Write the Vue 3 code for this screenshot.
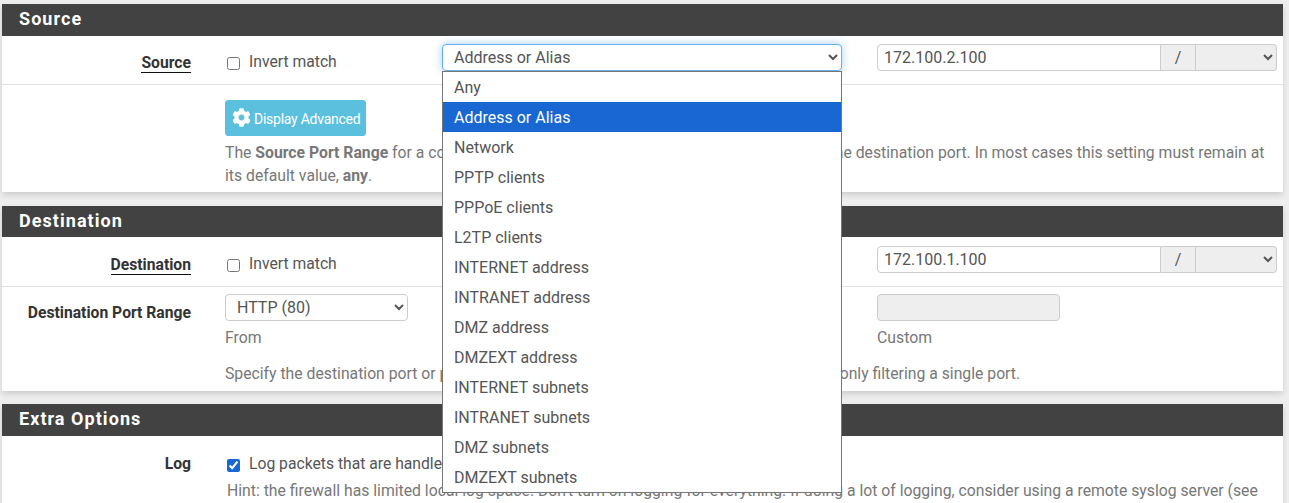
<script setup>
const targets = [
  "Any",
  "Address or Alias",
  "Network",
  "PPTP clients",
  "PPPoE clients",
  "L2TP clients",
  "INTERNET address",
  "INTRANET address",
  "DMZ address",
  "DMZEXT address",
  "INTERNET subnets",
  "INTRANET subnets",
  "DMZ subnets",
  "DMZEXT subnets",
];
</script>

<template>
  <div class="page">
    <section class="panel source">
      <h2>Source</h2>
      <div class="row first">
        <label class="lbl"><span class="under">Source</span></label>
        <label class="check"><input type="checkbox" /> <span>Invert match</span></label>
        <div class="picker">
          <select class="ctl focused">
            <option>Address or Alias</option>
          </select>
          <ul class="menu">
            <li v-for="t in targets" :key="t" :class="{ picked: t === 'Address or Alias' }">{{ t }}</li>
          </ul>
        </div>
        <div class="group last">
          <input class="ctl addr" type="text" value="172.100.2.100" />
          <span class="slash">/</span>
          <select class="ctl mask"></select>
        </div>
      </div>
      <div class="row advanced">
        <div class="wide">
          <button class="btn" type="button">
            <svg viewBox="0 0 512 512" width="19" height="19"><path fill="#fff" d="M487.4 315.7l-42.6-24.6c4.3-23.2 4.3-47 0-70.2l42.6-24.6c4.9-2.8 7.1-8.6 5.5-14-11.1-35.6-30-67.8-54.7-94.6-3.8-4.1-10-5.1-14.8-2.3L380.8 110c-17.9-15.4-38.5-27.3-60.8-35.1V25.8c0-5.6-3.9-10.5-9.4-11.7-36.7-8.2-74.3-7.8-109.2 0-5.5 1.2-9.4 6.1-9.4 11.7V75c-22.2 7.9-42.8 19.8-60.8 35.1L88.7 85.5c-4.9-2.8-11-1.9-14.8 2.3-24.7 26.7-43.6 58.9-54.7 94.6-1.7 5.4.6 11.2 5.5 14L67.3 221c-4.3 23.2-4.3 47 0 70.2l-42.6 24.6c-4.9 2.8-7.1 8.6-5.5 14 11.1 35.6 30 67.8 54.7 94.6 3.8 4.1 10 5.1 14.8 2.3l42.6-24.6c17.9 15.4 38.5 27.3 60.8 35.1v49.2c0 5.6 3.9 10.5 9.4 11.7 36.7 8.2 74.3 7.8 109.2 0 5.5-1.2 9.4-6.1 9.4-11.7v-49.2c22.2-7.9 42.8-19.8 60.8-35.1l42.6 24.6c4.9 2.8 11 1.9 14.8-2.3 24.7-26.7 43.6-58.9 54.7-94.6 1.5-5.5-.7-11.3-5.6-14.1zM256 336c-44.1 0-80-35.9-80-80s35.9-80 80-80 80 35.9 80 80-35.9 80-80 80z" /></svg>
            <span>Display Advanced</span>
          </button>
          <p class="help">The <b>Source Port Range</b> for a connection is typically random and almost never equal to the destination port. In most cases this setting must remain at its default value, <b>any</b>.</p>
        </div>
      </div>
    </section>

    <section class="panel dest">
      <h2>Destination</h2>
      <div class="row first">
        <label class="lbl"><span class="under">Destination</span></label>
        <label class="check"><input type="checkbox" /> <span>Invert match</span></label>
        <select class="ctl">
          <option>Address or Alias</option>
        </select>
        <div class="group last">
          <input class="ctl addr" type="text" value="172.100.1.100" />
          <span class="slash">/</span>
          <select class="ctl mask"></select>
        </div>
      </div>
      <div class="row ports">
        <label class="lbl">Destination Port Range</label>
        <div class="field">
          <select class="ctl">
            <option>HTTP (80)</option>
          </select>
          <span class="sub">From</span>
        </div>
        <select class="ctl">
          <option>HTTP (80)</option>
        </select>
        <div class="field last">
          <input class="ctl custom" type="text" disabled />
          <span class="sub">Custom</span>
        </div>
        <p class="help wide">Specify the destination port or port range for this rule. The "To" field may be left empty if only filtering a single port.</p>
      </div>
    </section>

    <section class="panel extra">
      <h2>Extra Options</h2>
      <div class="row logrow">
        <label class="lbl">Log</label>
        <div class="wide">
          <label class="check"><input type="checkbox" checked /> <span>Log packets that are handled by this rule</span></label>
          <p class="help hint">Hint: the firewall has limited local log space. Don't turn on logging for everything. If doing a lot of logging, consider using a remote syslog server (see the Status: System Logs: Settings page).</p>
        </div>
      </div>
    </section>
  </div>
</template>

<style scoped>
.page {
  height: 503px;
  overflow: hidden;
  box-sizing: border-box;
  padding: 4px 6px 0 2px;
  font-family: Roboto, "Liberation Sans", sans-serif;
  font-size: 16px;
  color: #555;
}
.panel {
  background: #fff;
  box-shadow: 0 3px 6px rgba(0, 0, 0, 0.14);
  margin-bottom: 13px;
}
.source {
  height: 188px;
  margin-bottom: 14px;
}
.dest {
  height: 185px;
}
h2 {
  margin: 0;
  height: 32px;
  padding-left: 17px;
  background: #424242;
  color: #fff;
  font-size: 18px;
  font-weight: 700;
  line-height: 30px;
  letter-spacing: 1.05px;
}
.dest h2 {
  height: 31px;
}
.row {
  display: grid;
  grid-template-columns: 189px 183px 400px 400px;
  column-gap: 34px;
  align-items: start;
}
.last {
  margin-left: 1px;
}
.first {
  height: 49px;
  box-sizing: border-box;
  padding-top: 8px;
  border-bottom: 1px solid #e0e0e0;
}
.dest .first {
  height: 50px;
  padding-top: 9px;
}
.lbl {
  text-align: right;
  font-size: 15.7px;
  font-weight: 700;
  color: #333;
  line-height: 20px;
  padding-top: 9px;
}
.under {
  border-bottom: 1px solid #111;
}
.check {
  display: flex;
  align-items: center;
  gap: 9px;
  margin-top: 5px;
  font-size: 15.7px;
  line-height: 26px;
  color: #555;
  white-space: nowrap;
}
.check input {
  margin: 3px 0 0 2px;
  width: 13px;
  height: 13px;
  accent-color: #1967d2;
}
.ctl {
  display: block;
  box-sizing: border-box;
  width: 100%;
  height: 27px;
  border: 1px solid #ccc;
  border-radius: 4px;
  background: #fff;
  color: #555;
  font: inherit;
  padding: 0 6px;
}
select.ctl {
  padding: 0 7px;
}
.focused {
  border-color: #66afe9;
  box-shadow: 0 0 8px rgba(102, 175, 233, 0.6);
}
.picker {
  position: relative;
}
.menu {
  position: absolute;
  top: 100%;
  left: 0;
  z-index: 5;
  width: 400px;
  box-sizing: border-box;
  margin: 0;
  padding: 0;
  list-style: none;
  background: #fff;
  border: 1px solid #767676;
}
.menu li {
  height: 30px;
  line-height: 32px;
  padding-left: 11px;
}
.menu .picked {
  background: #1967d2;
  color: #fff;
}
.group {
  display: flex;
  width: 400px;
}
.addr {
  flex: 1;
  min-width: 0;
  border-radius: 4px 0 0 4px;
}
.slash {
  width: 35px;
  flex: none;
  box-sizing: border-box;
  height: 27px;
  line-height: 26px;
  text-align: center;
  background: #eee;
  border: 1px solid #ccc;
  border-width: 1px 1px 1px 0;
}
.group .mask {
  width: 81px;
  flex: none;
  background: #eee;
  border-left: 0;
  border-radius: 0 4px 4px 0;
}
.advanced {
  padding-top: 15px;
}
.wide {
  grid-column: 2 / 5;
}
.btn {
  display: flex;
  align-items: center;
  gap: 3px;
  width: 141px;
  height: 36px;
  box-sizing: border-box;
  padding: 0 0 0 6px;
  border: 1px solid #5bc0de;
  border-radius: 3px;
  background: #5bc0de;
  color: #fff;
  font: 14px Roboto, sans-serif;
  letter-spacing: -0.25px;
  white-space: nowrap;
}
.btn svg {
  margin-top: -2px;
}
.btn span {
  padding-top: 1px;
}
.help {
  margin: 5px 0 0;
  font-size: 15.75px;
  color: #777;
  line-height: 23px;
}
.ports {
  padding-top: 7px;
}
.ports .lbl {
  padding-top: 9px;
}
.field {
  display: flex;
  flex-direction: column;
}
.sub {
  margin-top: 6px;
  font-size: 15.8px;
  line-height: 22px;
  color: #777;
}
.custom {
  width: 183px;
  background: #eee;
}
.ports .field .ctl {
  width: 183px;
}
.ports .help {
  margin-top: 13px;
}
.logrow {
  padding-top: 15px;
}
.logrow .lbl {
  padding-top: 3px;
}
.logrow .check {
  margin-top: 0;
}
.logrow .check input {
  margin-top: 2px;
}
.hint {
  margin: 2px 0 0 2px;
}
</style>

<style>
html,
body {
  margin: 0;
  overflow: hidden;
  background: #eee;
}
</style>
